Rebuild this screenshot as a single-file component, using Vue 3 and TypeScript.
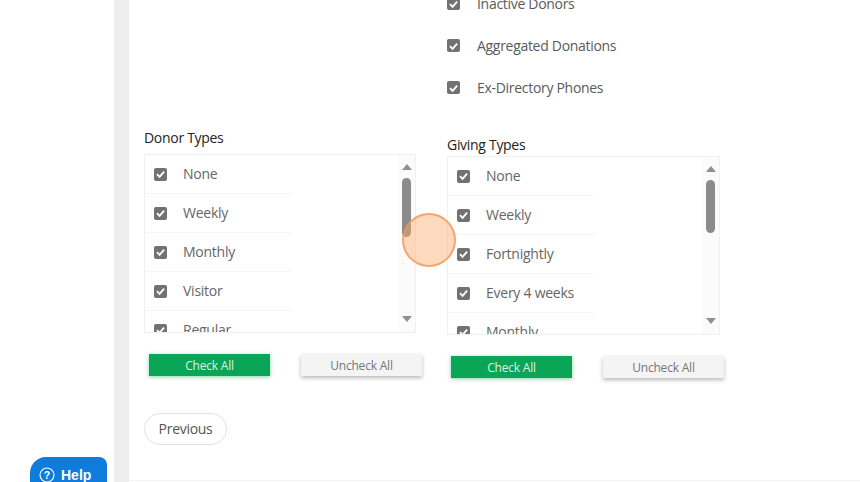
<script setup lang="ts">
const extras: string[] = ['Inactive Donors', 'Aggregated Donations', 'Ex-Directory Phones']
const lists = [
  { title: 'Donor Types', cls: 'donor', items: ['None', 'Weekly', 'Monthly', 'Visitor', 'Regular'] },
  { title: 'Giving Types', cls: 'giving', items: ['None', 'Weekly', 'Fortnightly', 'Every 4 weeks', 'Monthly'] },
]
</script>

<template>
  <div class="page">
    <aside class="side"></aside>
    <main class="content">
      <div class="columns">
        <section v-for="l in lists" :key="l.title" class="col" :class="l.cls">
          <div v-if="l.cls === 'giving'" class="extras">
            <label v-for="e in extras" :key="e" class="extra">
              <span class="check">
                <svg viewBox="0 0 14 14" width="14" height="14"><path d="M3.2 7.2 6 10 10.9 4.4" fill="none" stroke="#fff" stroke-width="2"/></svg>
              </span>
              <span>{{ e }}</span>
            </label>
          </div>
          <h3 class="title">{{ l.title }}</h3>
          <div class="box">
            <ul class="list">
              <li v-for="i in l.items" :key="i" class="row">
                <span class="check">
                  <svg viewBox="0 0 14 14" width="14" height="14"><path d="M3.2 7.2 6 10 10.9 4.4" fill="none" stroke="#fff" stroke-width="2"/></svg>
                </span>
                <span class="label">{{ i }}</span>
              </li>
            </ul>
            <div class="scroll">
              <span class="arrow up"></span>
              <span class="thumb"></span>
              <span class="arrow down"></span>
            </div>
          </div>
          <div class="actions">
            <button class="btn green">Check All</button>
            <button class="btn plain">Uncheck All</button>
          </div>
          <button v-if="l.cls === 'donor'" class="prev">Previous</button>
        </section>
      </div>
      <div class="rule"></div>
    </main>
    <div class="spot"></div>
    <button class="help">
      <svg viewBox="0 0 16 16" width="16" height="16"><circle cx="8" cy="8" r="7" fill="none" stroke="#fff" stroke-width="1.1"/><text x="8" y="11.7" text-anchor="middle" font-size="10.5" fill="#fff" font-family="Liberation Sans, sans-serif">?</text></svg>
      <span>Help</span>
    </button>
  </div>
</template>

<style>
html, body { margin: 0; background: #fff; }
</style>

<style scoped>
.page {
  position: relative;
  display: flex;
  width: 860px;
  height: 482px;
  overflow: hidden;
  background: #fff;
  font-family: "Open Sans", "Liberation Sans", sans-serif;
  color: #555;
}
.side {
  width: 114px;
  flex: none;
  border-right: 15px solid #eeeeee;
}
.content {
  flex: 1;
  display: flex;
  flex-direction: column;
}
.columns {
  display: flex;
  gap: 31px;
  height: 480px;
  padding-left: 15px;
  align-items: flex-start;
}
.col { width: 272px; }
.donor { margin-top: 129px; }
.giving { margin-top: -7px; }
.extras {
  display: flex;
  flex-direction: column;
  gap: 21px;
  margin-bottom: 38px;
}
.extra {
  display: flex;
  align-items: center;
  gap: 17px;
  height: 21px;
  font-size: 14px;
  letter-spacing: -0.3px;
  color: #5a5a5a;
}
.title {
  margin: 0 0 7px;
  font-size: 14px;
  line-height: 18px;
  font-weight: 400;
  letter-spacing: -0.3px;
  color: #222;
}
.giving .title { margin-bottom: 2px; }
.box {
  position: relative;
  box-sizing: border-box;
  width: 272px;
  height: 179px;
  border: 1px solid #f0f0f0;
  overflow: hidden;
  display: flex;
  justify-content: space-between;
}
.giving .box { width: 273px; }
.list {
  margin: 0;
  padding: 0;
  list-style: none;
  width: 147px;
}
.row {
  box-sizing: border-box;
  display: flex;
  align-items: center;
  gap: 16px;
  height: 39px;
  padding-left: 9px;
  border-bottom: 1px solid #f5f5f5;
  font-size: 14px;
  letter-spacing: -0.25px;
  color: #666;
}
.label { margin-top: -2px; }
.check {
  flex: none;
  display: inline-flex;
  width: 13px;
  height: 13px;
  border-radius: 2px;
  background: #727272;
  align-items: center;
  justify-content: center;
}
.scroll {
  width: 17px;
  flex: none;
  background: #fbfbfb;
  display: flex;
  flex-direction: column;
  align-items: center;
}
.arrow {
  width: 0;
  height: 0;
  border-left: 5px solid transparent;
  border-right: 5px solid transparent;
}
.arrow.up { border-bottom: 6px solid #8f8f8f; margin-top: 9px; }
.arrow.down { border-top: 6px solid #8f8f8f; margin-top: 79px; }
.thumb {
  width: 9px;
  height: 59px;
  margin-top: 8px;
  border-radius: 5px;
  background: #8b8b8b;
}
.giving .thumb { height: 53px; }
.giving .arrow.down { margin-top: 85px; }
.actions {
  display: flex;
  justify-content: space-between;
  width: 278px;
  margin-top: 21px;
  padding-left: 5px;
  box-sizing: border-box;
}
.giving .actions { margin-left: -1px; }
.btn {
  width: 121px;
  height: 22px;
  padding: 0;
  border: none;
  font: 12px "Open Sans", "Liberation Sans", sans-serif;
  letter-spacing: -0.2px;
}
.green {
  background: #0aa557;
  color: #d8f5e3;
  box-shadow: 0 1px 4px rgba(10, 165, 87, 0.5);
}
.plain {
  background: #f4f4f4;
  color: #777;
  box-shadow: 0 2px 4px rgba(0, 0, 0, 0.28);
}
.prev {
  display: block;
  width: 83px;
  height: 32px;
  margin-top: 37px;
  padding: 0 0 2px;
  background: #fff;
  border: 1px solid #e2e2e2;
  border-radius: 16px;
  font: 14px "Open Sans", "Liberation Sans", sans-serif;
  letter-spacing: -0.3px;
  color: #555;
}
.rule {
  height: 1px;
  background: #f3f3f3;
}
.spot {
  position: absolute;
  left: 402px;
  top: 213px;
  box-sizing: border-box;
  width: 54px;
  height: 54px;
  border-radius: 50%;
  border: 2px solid rgba(240, 150, 80, 0.75);
  background: rgba(250, 170, 110, 0.45);
}
.help {
  position: absolute;
  left: 30px;
  top: 457px;
  display: flex;
  align-items: center;
  gap: 6px;
  box-sizing: border-box;
  width: 77px;
  height: 36px;
  padding: 0 0 0 9px;
  border: none;
  border-radius: 16px 8px 0 0;
  background: #0f7bdc;
  color: #fff;
  font: 700 14px "Liberation Sans", Arial, sans-serif;
}
</style>
